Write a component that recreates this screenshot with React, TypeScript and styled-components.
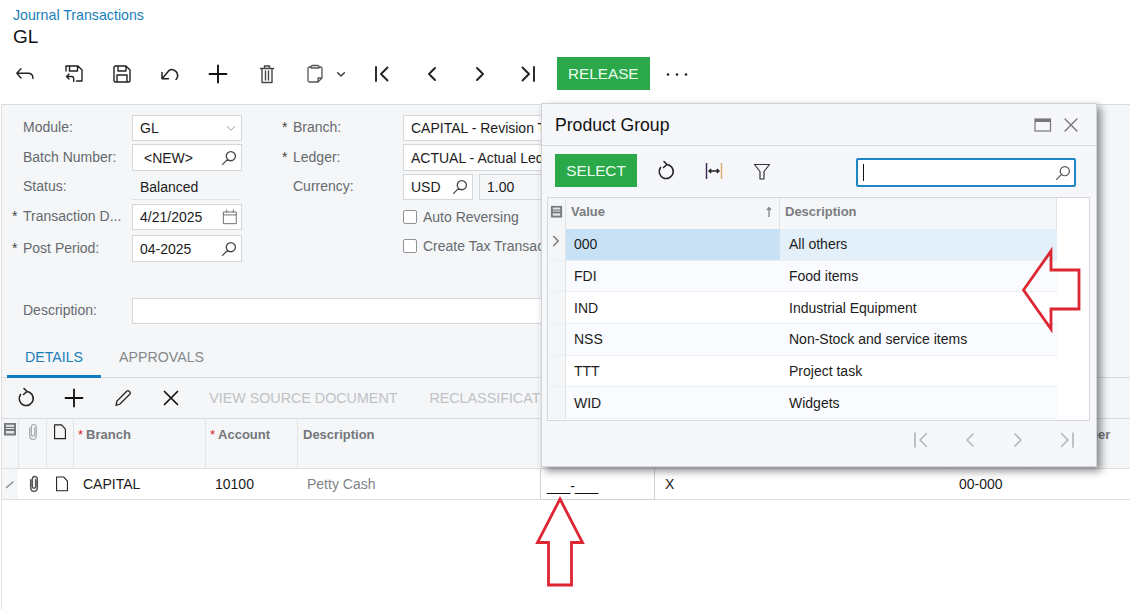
import React from 'react';
import styled, { createGlobalStyle } from 'styled-components';

const Global = createGlobalStyle`
  html, body { margin: 0; padding: 0; background: #fff; }
  body { font-family: "Liberation Sans", Arial, sans-serif; font-size: 14px; color: #1c1c1c; }
  #root { width: 1130px; height: 609px; overflow: hidden; position: relative; }
`;

const Page = styled.div`
  width: 1130px;
  height: 609px;
  position: relative;
  overflow: hidden;
  background: #fff;
`;
const Head = styled.header`
  height: 104px;
  box-sizing: border-box;
  padding-top: 7px;
  display: flex;
  flex-direction: column;
`;
const Crumb = styled.div`
  font-size: 14.2px;
  line-height: 17px;
  color: #1a7fb8;
  margin-left: 13px;
`;
const PageTitle = styled.div`
  font-size: 19px;
  line-height: 24px;
  color: #111;
  margin-left: 13px;
  margin-top: 1px;
`;
const TopBar = styled.div`
  display: flex;
  align-items: center;
  height: 33px;
  margin-top: 8px;
  padding-left: 1px;
`;
const Slot = styled.div<{ $w?: number; $color?: string }>`
  width: ${p => p.$w ?? 48.3}px;
  flex: none;
  display: flex;
  align-items: center;
  justify-content: center;
  color: ${p => p.$color ?? '#222'};
`;
const SplitSlot = styled.div`
  width: 66px;
  flex: none;
  box-sizing: border-box;
  padding-left: 12px;
  display: flex;
  align-items: center;
  gap: 6px;
  color: #555;
`;
const GreenButton = styled.div<{ $w: number; $ml?: number }>`
  width: ${p => p.$w}px;
  height: 33px;
  flex: none;
  margin-left: ${p => p.$ml ?? 0}px;
  background: #2aa84a;
  color: #eafff0;
  font-size: 15.3px;
  display: flex;
  align-items: center;
  justify-content: center;
`;
const Shell = styled.main`
  margin-left: 1px;
  border-left: 1px solid #dcdee0;
  height: 505px;
`;
const Panel = styled.section`
  background: #f4f6f8;
  border-top: 1px solid #d9dbde;
`;
const FormArea = styled.div`
  height: 240px;
  box-sizing: border-box;
  padding: 10px 0 0 10px;
`;
const FormGrid = styled.div`
  display: grid;
  grid-template-columns: 120px 110px 161px 139px;
  grid-template-rows: 29px 30px 30px 31px 27px;
`;
const Label = styled.div<{ $indent?: number; $tall?: boolean }>`
  display: flex;
  height: ${p => (p.$tall ? 26 : 24)}px;
  align-items: center;
  padding-left: ${p => p.$indent ?? 0}px;
  color: #666a6e;
  font-size: 14px;
  white-space: nowrap;
`;
const Star = styled.span`
  width: 11px;
  flex: none;
  color: #444;
  font-size: 14px;
`;
const Field = styled.div<{ $w?: number; $pad?: number; $flat?: boolean; $tall?: boolean }>`
  box-sizing: border-box;
  height: ${p => (p.$tall ? 27 : 26)}px;
  width: ${p => (p.$w ? `${p.$w}px` : '100%')};
  flex: ${p => (p.$w ? 'none' : '1 1 auto')};
  min-width: 0;
  display: flex;
  align-items: center;
  justify-content: space-between;
  background: ${p => (p.$flat ? 'transparent' : '#fff')};
  border: 1px solid #d4d7da;
  padding: 0 1px 0 ${p => p.$pad ?? 7}px;
  color: #1c1c1c;
  white-space: nowrap;
  overflow: hidden;
`;
const StatusValue = styled.div`
  box-sizing: border-box;
  height: 26px;
  width: 108px;
  padding: 0 0 0 8px;
  display: flex;
  align-items: center;
  border-bottom: 1px dotted #cfd2d5;
`;
const FieldPair = styled.div`
  display: flex;
  gap: 6px;
  min-width: 0;
  overflow: hidden;
`;
const CheckRow = styled.label<{ $h?: number }>`
  display: flex;
  align-items: center;
  gap: 6px;
  height: ${p => p.$h ?? 26}px;
  color: #666a6e;
  white-space: nowrap;
  overflow: hidden;
`;
const CheckBox = styled.span`
  width: 12px;
  height: 12px;
  border: 1px solid #8f9397;
  border-radius: 2px;
  background: #fff;
  flex: none;
`;
const DescRow = styled.div`
  display: grid;
  grid-template-columns: 120px 820px;
  margin-top: 36px;
`;
const Tabs = styled.nav`
  display: flex;
  height: 33px;
  box-sizing: border-box;
  padding-left: 5px;
  border-bottom: 1px solid #d9dbde;
`;
const Tab = styled.div<{ $active?: boolean }>`
  height: 33px;
  box-sizing: border-box;
  padding: 4px 18px 0;
  font-size: 14.2px;
  color: ${p => (p.$active ? '#1a7fb8' : '#85888b')};
  border-bottom: 3px solid ${p => (p.$active ? '#0f7cc0' : 'transparent')};
`;
const GridBar = styled.div`
  display: flex;
  align-items: center;
  height: 40px;
  border-bottom: 1px solid #d9dbde;
`;
const ActionStrip = styled.div`
  width: 345px;
  flex: none;
  overflow: hidden;
  display: flex;
  padding-left: 14px;
  box-sizing: border-box;
  gap: 32px;
`;
const DisabledAction = styled.span`
  color: #c0c2c5;
  white-space: nowrap;
  font-size: 14.3px;
`;
const cols = '16px 28px 27px 132px 92px 244px 114px 294px 79px 1fr';
const HeadRow = styled.div`
  display: grid;
  grid-template-columns: ${cols};
  height: 49px;
  border-bottom: 1px solid #dcdee0;
`;
const HeadCell = styled.div<{ $pad?: number; $center?: boolean }>`
  border-left: 1px solid #e2e4e6;
  padding: ${p => (p.$center ? 3 : 8)}px 0 0 ${p => (p.$center ? 0 : p.$pad ?? 4)}px;
  font-size: 13px;
  font-weight: bold;
  color: #73777b;
  white-space: nowrap;
  display: flex;
  align-items: flex-start;
  justify-content: ${p => (p.$center ? 'center' : 'flex-start')};
  &:first-child { border-left: 0; }
`;
const Req = styled.span`
  color: #d8232a;
  margin-right: 3px;
  font-weight: normal;
`;
const DataRow = styled.div`
  display: grid;
  grid-template-columns: ${cols};
  height: 30px;
  background: #fff;
  border-bottom: 1px solid #dcdee0;
  align-items: stretch;
`;
const DataCell = styled.div<{ $muted?: boolean; $grey?: boolean }>`
  padding-left: 10px;
  display: flex;
  align-items: center;
  color: ${p => (p.$muted ? '#808488' : '#1c1c1c')};
  background: ${p => (p.$grey ? '#f4f6f8' : 'transparent')};
  white-space: nowrap;
`;
const IconCell = styled.div<{ $shift?: number; $grey?: boolean }>`
  padding-left: ${p => p.$shift ?? 0}px;
  display: flex;
  align-items: center;
  justify-content: center;
  background: ${p => (p.$grey ? '#f4f6f8' : 'transparent')};
`;
const MaskCell = styled.div`
  border-right: 1px solid #d0d2d5;
  border-bottom: 1px solid #d0d2d5;
  border-left: 1px solid #d0d2d5;
  padding-left: 6px;
  display: flex;
  align-items: center;
  padding-top: 3px;
  margin-bottom: -1px;
  color: #111;
  margin-left: -1px;
`;
/* floating lookup window */
const Dialog = styled.aside`
  position: absolute;
  left: 541px;
  top: 103px;
  width: 556px;
  height: 364px;
  box-sizing: border-box;
  background: #f5f7fa;
  border: 1px solid #d2d4d7;
  box-shadow: 4px 4px 8px rgba(0, 0, 0, 0.45);
`;
const DialogTitle = styled.div`
  height: 41px;
  box-sizing: content-box;
  display: flex;
  align-items: center;
  justify-content: space-between;
  padding: 0 14px 0 13px;
  font-size: 17.6px;
  color: #111;
  border-bottom: 1px solid #d9dbde;
`;
const TitleText = styled.span`
  padding-top: 2px;
`;
const TitleIcons = styled.div`
  display: flex;
  align-items: center;
  gap: 8px;
  color: #777;
`;
const DialogBar = styled.div`
  display: flex;
  align-items: flex-start;
  height: 51px;
  box-sizing: border-box;
  padding: 8px 20px 0 13px;
`;
const BarSlots = styled.div`
  display: flex;
  height: 33px;
  align-items: center;
  margin-left: 5px;
`;
const Search = styled.div`
  margin-left: auto;
  margin-top: 4px;
  width: 220px;
  height: 29px;
  box-sizing: border-box;
  border: 2px solid #1f86c6;
  border-radius: 2px;
  background: #fff;
  display: flex;
  align-items: center;
  justify-content: space-between;
  padding: 0 0 0 5px;
  color: #555;
`;
const Caret = styled.span`
  width: 1px;
  height: 17px;
  background: #111;
`;
const LookupGrid = styled.div`
  margin-left: 5px;
  width: 543px;
  height: 224px;
  box-sizing: border-box;
  border: 1px solid #d5d7da;
  background: #fff;
`;
const lookupCols = '18px 214px 277px';
const LookupHead = styled.div`
  display: grid;
  grid-template-columns: ${lookupCols};
  width: 509px;
  height: 31px;
  background: #f4f6f8;
`;
const LookupHeadCell = styled.div<{ $tight?: boolean }>`
  display: flex;
  align-items: center;
  justify-content: space-between;
  padding: 0 ${p => (p.$tight ? 2 : 5)}px 4px;
  font-size: 13px;
  font-weight: bold;
  color: #797d81;
  border-right: 1px solid #e0e2e4;
`;
const LookupRow = styled.div<{ $alt?: boolean }>`
  display: grid;
  grid-template-columns: ${lookupCols};
  width: 509px;
  height: 31.7px;
  box-sizing: border-box;
  border-bottom: 1px solid #e8f0f6;
  background: ${p => (p.$alt ? '#f9fbfe' : '#fff')};
`;
const Selector = styled.div`
  background: #f4f6f8;
  border-right: 1px solid #e0e2e4;
  display: flex;
  align-items: center;
  justify-content: center;
  padding: 0 1px 6px 0;
  color: #777;
`;
const LookupCell = styled.div<{ $bg?: string; $pad: number }>`
  display: flex;
  align-items: center;
  padding-left: ${p => p.$pad}px;
  background: ${p => p.$bg ?? 'transparent'};
  color: #1c1c1c;
`;
const Pager = styled.div`
  display: flex;
  justify-content: flex-end;
  align-items: center;
  height: 38px;
  padding-right: 5px;
  color: #b6b8bb;
`;
const Annotation = styled.svg<{ $x: number; $y: number }>`
  position: absolute;
  left: ${p => p.$x}px;
  top: ${p => p.$y}px;
  overflow: visible;
`;

type IP = { d: string; s?: number; w?: number; c?: string };
const I: React.FC<IP> = ({ d, s = 24, w = 1.5, c = 'currentColor' }) => (
  <svg width={s} height={s} viewBox="0 0 24 24" fill="none" stroke={c} strokeWidth={w} strokeLinejoin="round" strokeLinecap="round" style={{ flex: 'none' }}>
    <path d={d} />
  </svg>
);
const P = {
  back: 'M8 6.7 L3.8 11.3 L8 16 M3.8 11.3 H15 Q20 11.3 20 16.5',
  saveBack: 'M5 9 V4 H17 L21 8 V19 H15.5 M8.5 4 V9 H16.5 V4 M8 12 L5.5 14.5 L8 17 M5.5 14.5 H11 Q12.7 14.5 12.7 17 V19.5',
  save: 'M4 5.5 Q4 4 5.5 4 H16 L20 8 V18.5 Q20 20 18.5 20 H5.5 Q4 20 4 18.5 Z M8 4 V9 H16 V4 M7 20 V13 H17 V20',
  undo: 'M4 10.5 V16.7 H10.5 M4 16.7 L11 8.6 Q13 7 15.5 8 A5.7 5.7 0 0 1 18 17.5',
  plus: 'M12 3.5 V20.5 M3.5 12 H20.5',
  trash: 'M5.5 6.5 H18.5 M9.5 6.5 V4 H14.5 V6.5 M7 6.5 V20.5 H17 V6.5 M10.5 9 V18 M13.5 9 V18',
  clip: 'M8 5 H6.5 Q5 5 5 6.5 V18.5 Q5 20 6.5 20 H15 L19 16 V6.5 Q19 5 17.5 5 H16 M8 5 Q8 3.5 9.5 3.5 H14.5 Q16 3.5 16 5 V6 H8 Z M15 20 V16 H19',
  down: 'M7 10 L12 15 L17 10',
  first: 'M6 5 V19 M17.5 5.5 L11 12 L17.5 18.5',
  prev: 'M15 6 L9 12 L15 18',
  next: 'M9 6 L15 12 L9 18',
  last: 'M6.5 5.5 L13 12 L6.5 18.5 M18 5 V19',
  refresh: 'M12.5 5.5 A7 7 0 1 1 6.5 8.5 M10 2.5 L13 5.5 L9.5 8.5',
  filter: 'M4.5 5.5 H19.5 L14 12.5 V20 H10 V12.5 Z',
  search: 'M19 10 A5 5 0 1 1 9 10 A5 5 0 1 1 19 10 M10.5 13.5 L5 19',
  calendar: 'M4.5 6 H19.5 V20 H4.5 Z M4.5 9.5 H19.5 M8 3.5 V6 M16 3.5 V6',
  pencil: 'M5 19.5 L6 15 L16 5 Q17 4 18.5 5.5 Q20 7 19 8 L9 18 Z',
  close: 'M5.5 5.5 L18.5 18.5 M18.5 5.5 L5.5 18.5',
  paper: 'M8 7 V16 Q8 21 12 21 Q16 21 16 16 V6.5 Q16 3 12.7 3 Q10 3 10 6.5 V15 Q10 17 12 17 Q14 17 14 15 V7',
  doc: 'M5.5 3.5 H14 L18.5 8.5 V20 H5.5 Z',
};

const Dots = () => (
  <svg width="24" height="24" viewBox="0 0 24 24" fill="#222">
    <circle cx="3" cy="12.5" r="1.3" />
    <circle cx="12" cy="12.5" r="1.3" />
    <circle cx="21" cy="12.5" r="1.3" />
  </svg>
);
const FitIcon = () => (
  <svg width="24" height="24" viewBox="0 0 24 24" fill="none" strokeWidth="1.4">
    <path d="M4.5 4 V20" stroke="#3a2050" />
    <path d="M19.5 4 V20" stroke="#e6a868" />
    <path d="M7 12 H17 M9.2 10 L7 12 L9.2 14 M14.8 10 L17 12 L14.8 14" stroke="#222" />
  </svg>
);
const ColumnsIcon = ({ size = 14 }: { size?: number }) => (
  <svg width={size} height={size} viewBox="0 0 14 14">
    <rect x="1" y="1" width="12" height="12.5" fill="#777a7d" />
    <rect x="3" y="2.8" width="8" height="2" fill="#e5e7e9" />
    <rect x="3" y="6" width="8" height="1" fill="#e5e7e9" />
    <rect x="3" y="9" width="8" height="2.5" fill="#e5e7e9" />
  </svg>
);
const MaxIcon = () => (
  <svg width="18" height="16" viewBox="0 0 18 16" fill="none">
    <rect x="1" y="2" width="15.5" height="12" stroke="#777" strokeWidth="1.2" />
    <rect x="1" y="2" width="15.5" height="3" fill="#777" />
  </svg>
);
const SortUp = () => (
  <svg width="10" height="12" viewBox="0 0 10 12" fill="none" stroke="#85888b" strokeWidth="1.4">
    <path d="M5 11 V2 M3 4 L5 1.5 L7 4" />
  </svg>
);
const TinyPen = () => (
  <svg width="12" height="12" viewBox="0 0 12 12" fill="none" stroke="#8d9094" strokeWidth="1.6">
    <path d="M2 10 L9.5 3.5" />
  </svg>
);

const rows: [string, string][] = [
  ['000', 'All others'],
  ['FDI', 'Food items'],
  ['IND', 'Industrial Equipment'],
  ['NSS', 'Non-Stock and service items'],
  ['TTT', 'Project task'],
  ['WID', 'Widgets'],
];

export default function App() {
  return (
    <Page>
      <Global />
      <Head>
        <Crumb>Journal Transactions</Crumb>
        <PageTitle>GL</PageTitle>
        <TopBar>
          <Slot><I d={P.back} w={1.4} /></Slot>
          <Slot><I d={P.saveBack} w={1.4} /></Slot>
          <Slot><I d={P.save} w={1.4} /></Slot>
          <Slot><I d={P.undo} w={1.5} /></Slot>
          <Slot $color="#111"><I d={P.plus} w={1.9} /></Slot>
          <Slot $color="#444"><I d={P.trash} w={1.4} /></Slot>
          <SplitSlot>
            <I d={P.clip} w={1.3} />
            <I d={P.down} s={16} w={2} c="#333" />
          </SplitSlot>
          <Slot $w={50}><I d={P.first} w={1.9} /></Slot>
          <Slot $w={50}><I d={P.prev} w={1.9} /></Slot>
          <Slot $w={46}><I d={P.next} w={1.9} /></Slot>
          <Slot $w={50}><I d={P.last} w={1.9} /></Slot>
          <GreenButton $w={93} $ml={4}>RELEASE</GreenButton>
          <Slot $w={54}><Dots /></Slot>
        </TopBar>
      </Head>
      <Shell>
        <Panel>
          <FormArea>
            <FormGrid>
              <Label><Star />Module:</Label>
              <Field>GL<I d={P.down} s={18} w={1.1} c="#888" /></Field>
              <Label $indent={40}><Star>*</Star>Branch:</Label>
              <Field>CAPITAL - Revision T</Field>

              <Label $tall><Star />Batch Number:</Label>
              <Field $pad={11} $tall>&lt;NEW&gt;<I d={P.search} s={22} w={1.4} c="#444" /></Field>
              <Label $tall $indent={40}><Star>*</Star>Ledger:</Label>
              <Field $tall>ACTUAL - Actual Led</Field>

              <Label><Star />Status:</Label>
              <StatusValue>Balanced</StatusValue>
              <Label $indent={40}><Star />Currency:</Label>
              <FieldPair>
                <Field $w={70}>USD<I d={P.search} s={22} w={1.4} c="#444" /></Field>
                <Field $flat>1.00</Field>
              </FieldPair>

              <Label><Star>*</Star>Transaction D...</Label>
              <Field>4/21/2025<I d={P.calendar} s={20} w={1.1} c="#666" /></Field>
              <div />
              <CheckRow><CheckBox />Auto Reversing</CheckRow>

              <Label $tall><Star>*</Star>Post Period:</Label>
              <Field $tall>04-2025<I d={P.search} s={22} w={1.4} c="#444" /></Field>
              <div />
              <CheckRow $h={22}><CheckBox />Create Tax Transac</CheckRow>
            </FormGrid>
            <DescRow>
              <Label><Star />Description:</Label>
              <Field />
            </DescRow>
          </FormArea>
          <Tabs>
            <Tab $active>DETAILS</Tab>
            <Tab>APPROVALS</Tab>
          </Tabs>
          <GridBar>
            <Slot><I d={P.refresh} w={1.6} c="#222" /></Slot>
            <Slot $color="#111"><I d={P.plus} w={1.8} /></Slot>
            <Slot><I d={P.pencil} w={1.3} /></Slot>
            <Slot $color="#111"><I d={P.close} w={1.7} /></Slot>
            <ActionStrip>
              <DisabledAction>VIEW SOURCE DOCUMENT</DisabledAction>
              <DisabledAction>RECLASSIFICAT</DisabledAction>
            </ActionStrip>
          </GridBar>
          <HeadRow>
            <HeadCell $center><ColumnsIcon /></HeadCell>
            <HeadCell $center><I d={P.paper} s={20} w={1.4} c="#a3a6a9" /></HeadCell>
            <HeadCell $center><I d={P.doc} s={20} w={1.4} c="#222" /></HeadCell>
            <HeadCell><span><Req>*</Req>Branch</span></HeadCell>
            <HeadCell><span><Req>*</Req>Account</span></HeadCell>
            <HeadCell $pad={5}>Description</HeadCell>
            <HeadCell />
            <HeadCell />
            <HeadCell />
            <HeadCell>Ref. Number</HeadCell>
          </HeadRow>
        </Panel>
        <DataRow>
          <IconCell $grey><TinyPen /></IconCell>
          <IconCell $shift={4}><I d={P.paper} s={20} w={1.8} c="#555" /></IconCell>
          <IconCell $shift={4}><I d={P.doc} s={20} w={1.3} c="#222" /></IconCell>
          <DataCell>CAPITAL</DataCell>
          <DataCell>10100</DataCell>
          <DataCell $muted>Petty Cash</DataCell>
          <MaskCell>___-___</MaskCell>
          <DataCell>X</DataCell>
          <DataCell>00-000</DataCell>
          <DataCell />
        </DataRow>
      </Shell>

      <Dialog>
        <DialogTitle>
          <TitleText>Product Group</TitleText>
          <TitleIcons>
            <MaxIcon />
            <I d={P.close} s={22} w={1.5} c="#777" />
          </TitleIcons>
        </DialogTitle>
        <DialogBar>
          <GreenButton $w={82}>SELECT</GreenButton>
          <BarSlots>
            <Slot $w={48}><I d={P.refresh} w={1.6} c="#222" /></Slot>
            <Slot $w={48}><FitIcon /></Slot>
            <Slot $w={48}><I d={P.filter} w={1.2} c="#333" /></Slot>
          </BarSlots>
          <Search>
            <Caret />
            <I d={P.search} s={22} w={1.3} c="#555" />
          </Search>
        </DialogBar>
        <LookupGrid>
          <LookupHead>
            <LookupHeadCell $tight><ColumnsIcon size={13} /></LookupHeadCell>
            <LookupHeadCell>Value<SortUp /></LookupHeadCell>
            <LookupHeadCell>Description</LookupHeadCell>
          </LookupHead>
          {rows.map(([v, d], i) => (
            <LookupRow key={v} $alt={i % 2 === 1}>
              <Selector>{i === 0 && <I d={P.next} s={18} w={2} c="#777" />}</Selector>
              <LookupCell $pad={8} $bg={i === 0 ? '#c8e1f5' : undefined}>{v}</LookupCell>
              <LookupCell $pad={9} $bg={i === 0 ? '#e3f0fa' : undefined}>{d}</LookupCell>
            </LookupRow>
          ))}
        </LookupGrid>
        <Pager>
          <Slot $w={48.5} $color="#b6b8bb"><I d={P.first} w={1.7} /></Slot>
          <Slot $w={48.5} $color="#b6b8bb"><I d={P.prev} w={1.7} /></Slot>
          <Slot $w={48.5} $color="#b6b8bb"><I d={P.next} w={1.7} /></Slot>
          <Slot $w={48.5} $color="#b6b8bb"><I d={P.last} w={1.7} /></Slot>
        </Pager>
      </Dialog>

      <Annotation $x={1020} $y={248} width={62} height={84} fill="none" stroke="#dc2632" strokeWidth="2.8" strokeLinejoin="miter">
        <path d="M3.5 42 L31 3 V22 H59 V61 H31 V81 Z" />
      </Annotation>
      <Annotation $x={535} $y={496} width={50} height={91} fill="none" stroke="#dc2632" strokeWidth="2.8" strokeLinejoin="miter">
        <path d="M25 3 L47.5 46.5 H36.5 V89 H13.5 V46.5 H2.5 Z" />
      </Annotation>
    </Page>
  );
}
